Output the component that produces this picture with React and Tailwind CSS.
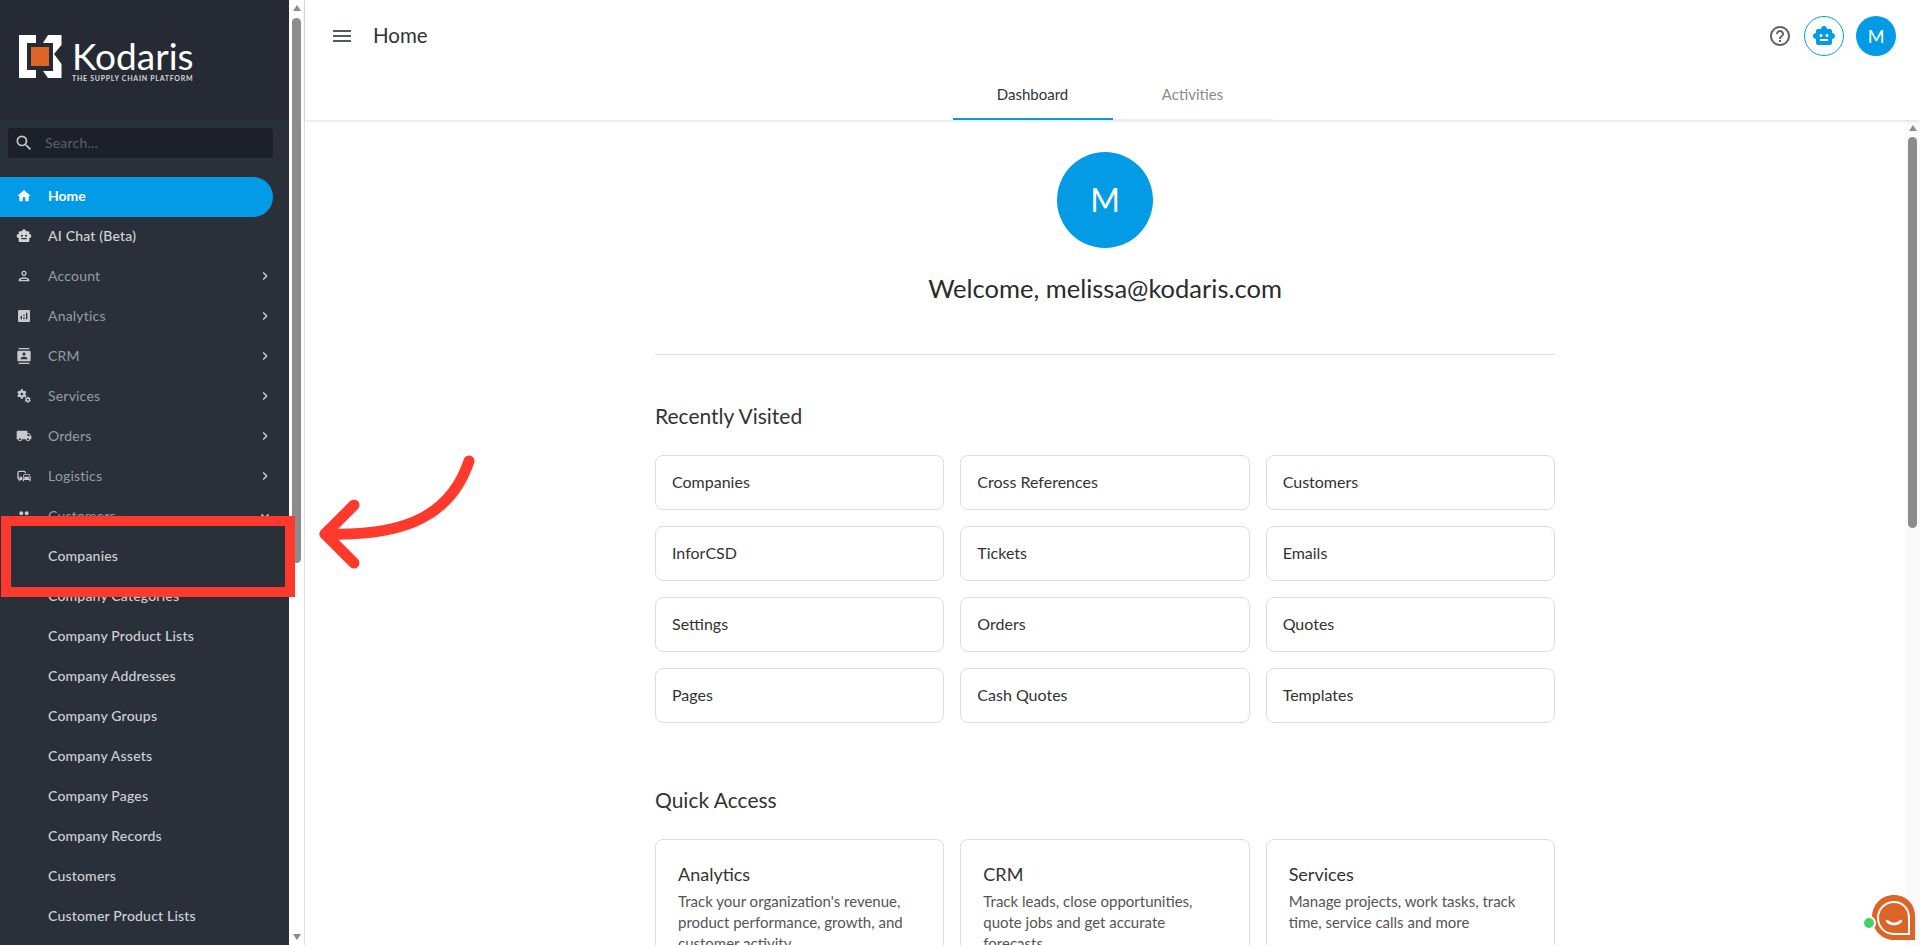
import {
  MdAnalytics,
  MdChevronRight,
  MdCommute,
  MdContacts,
  MdExpandMore,
  MdHelpOutline,
  MdHome,
  MdLocalShipping,
  MdMenu,
  MdMiscellaneousServices,
  MdOutlinePerson,
  MdPeople,
  MdSearch,
  MdSmartToy,
} from "react-icons/md";

const navItems = [
  { label: "Account", icon: MdOutlinePerson },
  { label: "Analytics", icon: MdAnalytics },
  { label: "CRM", icon: MdContacts },
  { label: "Services", icon: MdMiscellaneousServices },
  { label: "Orders", icon: MdLocalShipping },
  { label: "Logistics", icon: MdCommute },
];

const customerItems = [
  "Companies",
  "Company Categories",
  "Company Product Lists",
  "Company Addresses",
  "Company Groups",
  "Company Assets",
  "Company Pages",
  "Company Records",
  "Customers",
  "Customer Product Lists",
];

const recentlyVisited = [
  "Companies",
  "Cross References",
  "Customers",
  "InforCSD",
  "Tickets",
  "Emails",
  "Settings",
  "Orders",
  "Quotes",
  "Pages",
  "Cash Quotes",
  "Templates",
];

const quickAccess = [
  {
    title: "Analytics",
    text: "Track your organization's revenue, product performance, growth, and customer activity",
  },
  {
    title: "CRM",
    text: "Track leads, close opportunities, quote jobs and get accurate forecasts",
  },
  {
    title: "Services",
    text: "Manage projects, work tasks, track time, service calls and more",
  },
];

const KodarisLogo = () => (
  <div className="flex items-start gap-[10px]">
    <svg width="44" height="44" viewBox="17 35 44 44" className="shrink-0">
      <path d="M18 35H35V43H26V70H35V78H18Z" fill="#fff" />
      <path
        d="M47 35H60.5V45L53 54L60.5 64V78H47L42 71H52V43H42Z"
        fill="#fff"
      />
      <rect x="30" y="47" width="18" height="19" fill="#dd6427" />
    </svg>
    <div className="flex flex-col">
      <span className="text-[37px] leading-[36px] text-white mt-[3px]">
        Kodaris
      </span>
      <span className="text-[7px] leading-[8px] font-bold text-[#d5d7da] tracking-[0.72px] whitespace-nowrap">
        THE SUPPLY CHAIN PLATFORM
      </span>
    </div>
  </div>
);

const SidebarScrollbar = () => (
  <div className="w-[15px] shrink-0 bg-white flex flex-col items-center">
    <div className="mt-[5px] w-0 h-0 border-x-[4.5px] border-x-transparent border-b-[6px] border-b-[#8c8c8c]" />
    <div className="mt-[7px] w-[9px] h-[545px] rounded-[5px] bg-[#8c8c8c]" />
    <div className="mt-auto mb-[5px] w-0 h-0 border-x-[4.5px] border-x-transparent border-t-[6px] border-t-[#8c8c8c]" />
  </div>
);

const Sidebar = () => (
  <div className="w-[289px] shrink-0 bg-[#2a303a] flex flex-col overflow-hidden">
    <div className="h-[120px] shrink-0 bg-[#252a34] pl-[18px] pt-[35px]">
      <KodarisLogo />
    </div>
    <div className="pt-[8px] pl-[8px] pr-[16px]">
      <div className="h-[30px] rounded-[3px] bg-[#1d2028] flex items-center px-[6px]">
        <MdSearch className="w-[20px] h-[20px] text-[#c4c6c9]" />
        <span className="ml-[11px] mb-[2px] text-[14px] tracking-[0.2px] text-[#5b6068]">
          Search...
        </span>
      </div>
    </div>
    <div className="mt-[19px] pr-[16px] text-[14px] tracking-[0.2px]">
      <div className="h-[40px] rounded-r-[20px] bg-[#039be5] flex items-center pb-[2px] text-white font-bold tracking-normal">
        <div className="w-[48px] flex justify-center">
          <MdHome className="w-[16px] h-[16px]" />
        </div>
        <span className="mb-[2px]">Home</span>
      </div>
      <div className="h-[40px] flex items-center pb-[2px] text-[#d3d5d8] font-medium">
        <div className="w-[48px] flex justify-center">
          <MdSmartToy className="w-[16px] h-[16px]" />
        </div>
        <span className="mb-[2px]">AI Chat (Beta)</span>
      </div>
      {navItems.map((item) => (
        <div
          key={item.label}
          className="h-[40px] flex items-center pb-[2px] text-[#979ca3]"
        >
          <div className="w-[48px] flex justify-center text-[#c8cacd]">
            <item.icon className="w-[16px] h-[16px]" />
          </div>
          <span className="flex-1 mb-[2px]">{item.label}</span>
          <MdChevronRight className="w-[16px] h-[16px] text-[#d5d7da]" />
        </div>
      ))}
      <div className="h-[40px] flex items-center pb-[2px] text-[#979ca3]">
        <div className="w-[48px] flex justify-center text-[#c8cacd]">
          <MdPeople className="w-[16px] h-[16px]" />
        </div>
        <span className="flex-1 mb-[2px]">Customers</span>
        <MdExpandMore className="w-[16px] h-[16px] text-[#d5d7da]" />
      </div>
      {customerItems.map((label) => (
        <div
          key={label}
          className="h-[40px] flex items-center pb-[4px] pl-[48px] text-[#cfd2d6] font-medium"
        >
          {label}
        </div>
      ))}
    </div>
  </div>
);

const Header = () => (
  <div className="h-[120px] shrink-0 bg-white shadow-[0_1px_4px_rgba(0,0,0,0.12)] flex flex-col z-10">
    <div className="h-[72px] flex items-center pl-[25px] pr-[24px]">
      <MdMenu className="w-[24px] h-[24px] text-[#555a60]" />
      <span className="ml-[19px] pb-[2px] text-[20.5px] text-[#333]">Home</span>
      <MdHelpOutline className="ml-auto w-[24px] h-[24px] text-[#5f6368]" />
      <div className="ml-[12px] w-[40px] h-[40px] rounded-full border border-[#039be5] flex items-center justify-center">
        <MdSmartToy className="w-[24px] h-[24px] text-[#039be5]" />
      </div>
      <div className="ml-[12px] w-[40px] h-[40px] rounded-full bg-[#039be5] flex items-center justify-center text-white text-[18px]">
        M
      </div>
    </div>
    <div className="flex-1 flex justify-center text-[15px]">
      <div className="w-[160px] flex items-center justify-center text-[#333] border-b-2 border-[#039be5] pb-[2px]">
        Dashboard
      </div>
      <div className="w-[160px] flex items-center justify-center text-[#8b8b8b] border-b border-[#eeeeee] pb-[3px]">
        Activities
      </div>
    </div>
  </div>
);

const MainScrollbar = () => (
  <div className="w-[15px] shrink-0 bg-[#fafafa] flex flex-col items-center">
    <div className="mt-[5px] w-0 h-0 border-x-[4.5px] border-x-transparent border-b-[6px] border-b-[#8c8c8c]" />
    <div className="mt-[6px] w-[9px] h-[391px] rounded-[5px] bg-[#8c8c8c]" />
  </div>
);

const Dashboard = () => (
  <div className="flex-1 flex min-h-0">
    <div className="flex-1 overflow-hidden flex justify-center">
      <div className="w-[900px] shrink-0 pt-[32px] flex flex-col">
        <div className="flex flex-col items-center">
          <div className="w-[96px] h-[96px] rounded-full bg-[#039be5] flex items-center justify-center text-white text-[32px]">
            M
          </div>
          <div className="mt-[24px] mb-[1px] text-[25.5px] leading-[32px] text-[#2b2b2b]">
            Welcome, melissa@kodaris.com
          </div>
        </div>
        <div className="mt-[49px] border-t border-[#dddddd]" />
        <div className="mt-[47px] text-[21px] leading-[28px] text-[#333]">
          Recently Visited
        </div>
        <div className="mt-[25px] grid grid-cols-3 gap-x-[16px] gap-y-[16px]">
          {recentlyVisited.map((label) => (
            <div
              key={label}
              className="h-[55px] rounded-[8px] border border-[#dddddd] flex items-center pl-[16px] pb-[2px] text-[16px] text-[#333]"
            >
              {label}
            </div>
          ))}
        </div>
        <div className="mt-[63px] text-[21px] leading-[28px] text-[#333]">
          Quick Access
        </div>
        <div className="mt-[25px] grid grid-cols-3 gap-x-[16px]">
          {quickAccess.map((card) => (
            <div
              key={card.title}
              className="h-[180px] rounded-[8px] border border-[#dddddd] px-[22px] pt-[21px]"
            >
              <div className="text-[18px] leading-[26px] text-[#333]">
                {card.title}
              </div>
              <div className="mt-[4px] text-[15px] leading-[21px] text-[#555]">
                {card.text}
              </div>
            </div>
          ))}
        </div>
      </div>
    </div>
    <MainScrollbar />
  </div>
);

const CalloutOverlay = () => (
  <>
    <div className="absolute left-[1px] top-[516px] w-[294px] h-[81px] border-[10px] border-[#ff3a2d]" />
    <svg
      className="absolute left-[310px] top-[445px]"
      width="175"
      height="135"
      viewBox="310 445 175 135"
      fill="none"
      stroke="#ff3a2d"
      strokeWidth="11"
      strokeLinecap="round"
      strokeLinejoin="round"
    >
      <path d="M469 461C452 512 410 537 325 534" />
      <path d="M354 505L325 534L354 563" />
    </svg>
  </>
);

const ChatWidget = () => (
  <svg
    className="absolute left-[1862px] top-[893px]"
    width="56"
    height="50"
    viewBox="0 0 56 50"
  >
    <path
      d="M32 2C44 2 53 11 53 23V47H32C20 47 10 37 10 24C10 11 20 2 32 2Z"
      fill="#dd6427"
    />
    <path
      d="M32 9C41 9 47 16 47 25V41H32C23 41 16 34 16 25C16 16 23 9 32 9Z"
      fill="#dd6427"
      stroke="#fff"
      strokeWidth="2"
    />
    <path
      d="M25 28C29 32 35 32 39 28"
      fill="none"
      stroke="#fff"
      strokeWidth="2.5"
      strokeLinecap="round"
    />
    <circle cx="7" cy="30" r="7" fill="#fff" />
    <circle cx="7" cy="30" r="5" fill="#46cf6f" />
  </svg>
);

export default function App() {
  return (
    <div
      className="relative h-screen flex overflow-hidden bg-white"
      style={{ fontFamily: '"Lato", "Noto Sans", sans-serif' }}
    >
      <Sidebar />
      <SidebarScrollbar />
      <div className="flex-1 min-w-0 flex flex-col border-l border-[#e0e0e0]">
        <Header />
        <Dashboard />
      </div>
      <CalloutOverlay />
      <ChatWidget />
    </div>
  );
}
